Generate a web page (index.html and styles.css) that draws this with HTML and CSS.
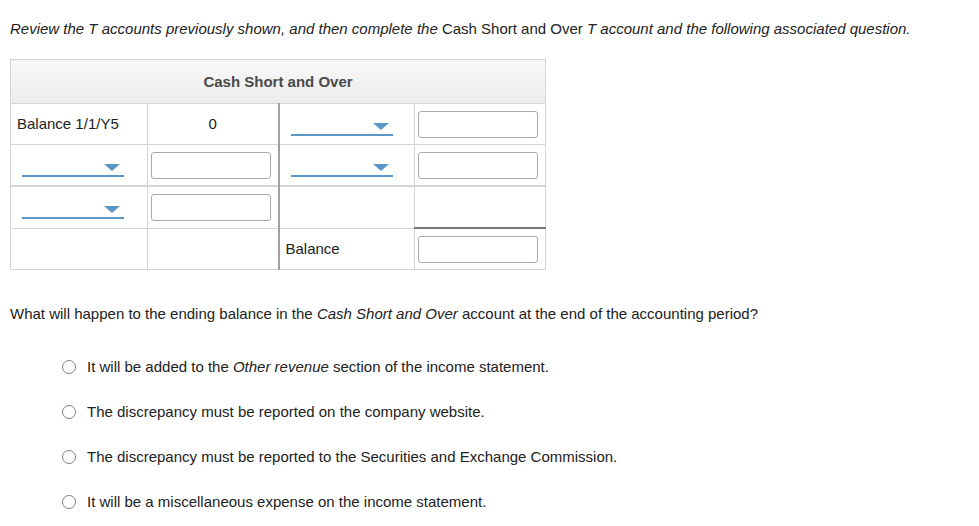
FILE: index.html
```html
<!DOCTYPE html>
<html lang="en">
<head>
    <meta charset="UTF-8">
    <title>Cash Short and Over</title>
    <link rel="stylesheet" href="styles.css">
</head>
<body>
    <div class="container">
        <p class="prompt"><em>Review the T accounts previously shown, and then complete the</em> Cash Short and Over <em>T account and the following associated question.</em></p>

        <table class="t-account">
            <colgroup>
                <col class="col-a">
                <col class="col-b">
                <col class="col-c">
                <col class="col-d">
            </colgroup>
            <thead>
                <tr>
                    <th colspan="4">Cash Short and Over</th>
                </tr>
            </thead>
            <tbody>
                <tr>
                    <td class="label">Balance 1/1/Y5</td>
                    <td class="amount center-line">0</td>
                    <td class="label"><span class="dropdown"></span></td>
                    <td class="field"><input type="text" class="amount-input"></td>
                </tr>
                <tr>
                    <td class="label"><span class="dropdown"></span></td>
                    <td class="field center-line"><input type="text" class="amount-input"></td>
                    <td class="label"><span class="dropdown"></span></td>
                    <td class="field"><input type="text" class="amount-input"></td>
                </tr>
                <tr class="split">
                    <td class="label"><span class="dropdown"></span></td>
                    <td class="field center-line"><input type="text" class="amount-input"></td>
                    <td class="label"></td>
                    <td class="field"></td>
                </tr>
                <tr>
                    <td class="label"></td>
                    <td class="field center-line"></td>
                    <td class="label">Balance</td>
                    <td class="field total"><input type="text" class="amount-input"></td>
                </tr>
            </tbody>
        </table>

        <p class="question">What will happen to the ending balance in the <em>Cash Short and Over</em> account at the end of the accounting period?</p>

        <ul class="choices">
            <li><span class="radio"></span><span class="choice-text">It will be added to the <em>Other revenue</em> section of the income statement.</span></li>
            <li><span class="radio"></span><span class="choice-text">The discrepancy must be reported on the company website.</span></li>
            <li><span class="radio"></span><span class="choice-text">The discrepancy must be reported to the Securities and Exchange Commission.</span></li>
            <li><span class="radio"></span><span class="choice-text">It will be a miscellaneous expense on the income statement.</span></li>
        </ul>
    </div>
</body>
</html>
```

FILE: styles.css
```css
body {
    font-family: 'Liberation Sans', Arial, sans-serif;
    font-size: 15px;
    line-height: 18px;
    margin: 0;
    color: #222;
    background: white;
}
.container {
    padding: 20px 10px 0 10px;
}
.prompt {
    margin: 0 0 21px 0;
}
.t-account {
    border-collapse: collapse;
    table-layout: fixed;
    width: 535px;
}
.col-a {
    width: 137px;
}
.col-b {
    width: 131px;
}
.col-c {
    width: 136px;
}
.col-d {
    width: 131px;
}
.t-account th {
    height: 43px;
    padding: 0;
    border: 1px solid #d3d6d8;
    background: linear-gradient(#f9f9f9, #ebebeb);
    color: #4a4a4a;
    font-weight: bold;
    text-align: center;
}
.t-account td {
    height: 40px;
    padding: 0;
    border: 1px solid #d3d6d8;
    vertical-align: middle;
}
.t-account td.label {
    padding-left: 6px;
}
.t-account td.amount {
    text-align: center;
}
.t-account td.field {
    padding-left: 3px;
}
.t-account td.center-line {
    border-right: 2px solid #a0a0a0;
}
.t-account tr.split td {
    border-top: 2px solid #d3d6d8;
}
.t-account td.total {
    border-top: 2px solid #7a7a7a;
}
.amount-input {
    display: block;
    box-sizing: border-box;
    width: 120px;
    height: 27px;
    margin: 0;
    border: 1px solid #aaa;
    border-radius: 3px;
    background: white;
}
.dropdown {
    display: block;
    position: relative;
    width: 102px;
    height: 19px;
    margin: 3px 0 0 5px;
    border-bottom: 2px solid #5a96c8;
}
.dropdown::after {
    content: "";
    position: absolute;
    right: 4px;
    top: 8px;
    border-left: 8px solid transparent;
    border-right: 8px solid transparent;
    border-top: 7px solid #5a96c8;
}
.question {
    margin: 35px 0 0 0;
}
.choices {
    list-style: none;
    margin: 35px 0 0 0;
    padding: 0 0 0 52px;
}
.choices li {
    display: flex;
    align-items: center;
    height: 18px;
    margin-bottom: 27px;
}
.radio {
    flex: none;
    box-sizing: border-box;
    width: 14px;
    height: 14px;
    margin-right: 11px;
    border: 1px solid #808080;
    border-radius: 50%;
}
```
